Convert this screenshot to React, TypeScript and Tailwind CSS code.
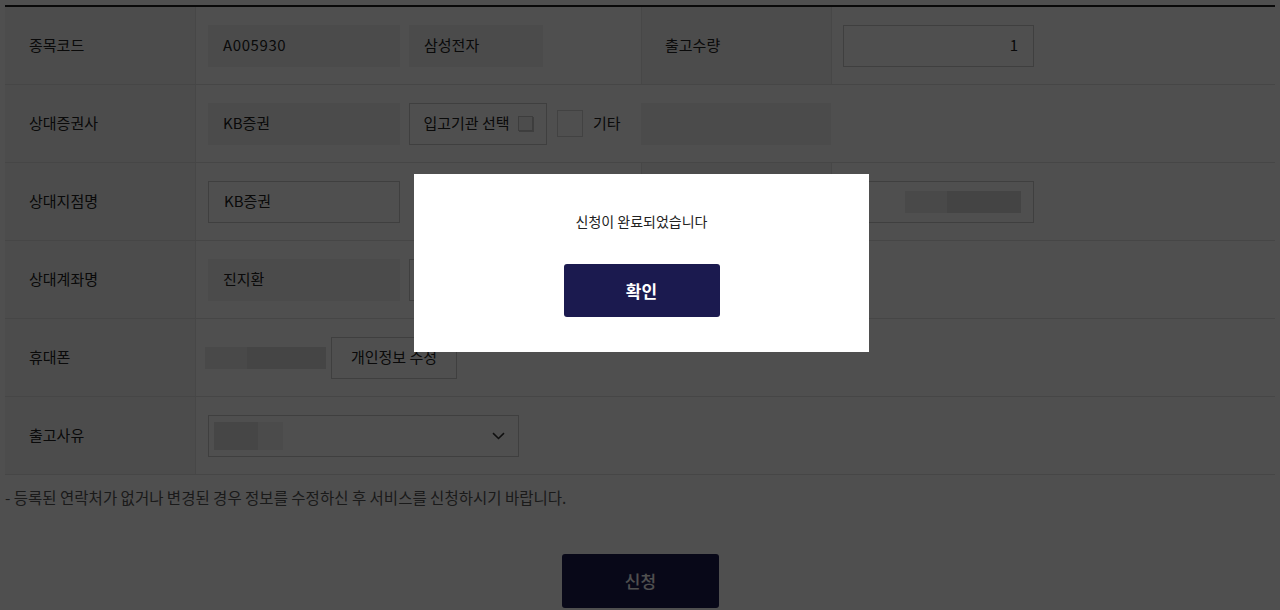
import React from "react";

const font = { fontFamily: '"Noto Sans CJK KR", "Noto Sans", sans-serif' };

const rowCls = "flex h-[78px] border-b border-[#e2e2e2]";
const labelCls =
	"w-[191px] shrink-0 bg-[#f5f5f5] border-r border-[#e6e6e6] flex items-center pl-[24px] text-[15px] text-[#222]";
const readBox = "h-[42px] bg-[#f2f2f2] flex items-center pl-[15px] text-[15px] text-[#222]";
const whiteBox =
	"h-[42px] bg-white border border-[#cccccc] flex items-center pl-[15px] text-[15px] text-[#222]";
const btnBox =
	"h-[42px] bg-white border border-[#cccccc] flex items-center justify-center text-[15px] text-[#222]";

function Label({ children }: { children: React.ReactNode }) {
	return <div className={labelCls}>{children}</div>;
}

function Masked({ a, b, ca, cb }: { a: number; b: number; ca: string; cb: string }) {
	return (
		<div className="flex h-[22px]">
			<div className={ca} style={{ width: a }} />
			<div className={cb} style={{ width: b }} />
		</div>
	);
}

export default function App() {
	return (
		<div className="relative h-[610px] w-[1280px] overflow-hidden bg-white" style={font}>
			<div className="px-[5px]">
				<div className="mt-[5px] border-t-2 border-[#1e1e1e]">
					{/* 종목코드 */}
					<div className={rowCls}>
						<Label>종목코드</Label>
						<div className="flex w-[445px] shrink-0 items-center gap-[9px] pl-[12px]">
							<div className={`${readBox} w-[192px] tracking-[0.04em]`}>A005930</div>
							<div className={`${readBox} w-[134px] pl-[14px]`}>삼성전자</div>
						</div>
						<div className="flex w-[191px] shrink-0 items-center border-x border-[#e6e6e6] bg-[#f5f5f5] pl-[23px] text-[15px] text-[#222]">
							출고수량
						</div>
						<div className="flex flex-1 items-center pl-[11px]">
							<div className="flex h-[42px] w-[191px] items-center justify-end border border-[#cccccc] bg-white pr-[15px] text-[15px] text-[#222]">
								1
							</div>
						</div>
					</div>

					{/* 상대증권사 */}
					<div className={rowCls}>
						<Label>상대증권사</Label>
						<div className="flex w-[445px] shrink-0 items-center pl-[12px]">
							<div className={`${readBox} w-[192px]`}>KB증권</div>
							<div className={`${btnBox} ml-[9px] w-[138px] gap-[8px]`}>
								<span>입고기관 선택</span>
								<span className="h-[15px] w-[15px] border border-[#c4c4c4] bg-[#f4f4f4] shadow-[1px_1px_0_#c8c8c8]" />
							</div>
							<div className="ml-[10px] h-[27px] w-[26px] border border-[#d4d4d4] bg-white" />
							<span className="ml-[10px] text-[15px] text-[#222]">기타</span>
						</div>
						<div className="flex items-center">
							<div className="h-[42px] w-[190px] bg-[#f2f2f2]" />
						</div>
					</div>

					{/* 상대지점명 */}
					<div className={rowCls}>
						<Label>상대지점명</Label>
						<div className="flex w-[445px] shrink-0 items-center pl-[12px]">
							<div className={`${whiteBox} w-[192px]`}>KB증권</div>
						</div>
						<div className="flex w-[191px] shrink-0 items-center border-x border-[#e6e6e6] bg-[#f5f5f5] pl-[23px] text-[15px] text-[#222]">
							상대계좌번호
						</div>
						<div className="flex flex-1 items-center pl-[11px]">
							<div className="flex h-[42px] w-[191px] items-center border border-[#cccccc] bg-white pl-[61px]">
								<Masked a={42} b={74} ca="bg-[#ececec]" cb="bg-[#dcdcdc]" />
							</div>
						</div>
					</div>

					{/* 상대계좌명 */}
					<div className={rowCls}>
						<Label>상대계좌명</Label>
						<div className="flex w-[445px] shrink-0 items-center pl-[12px]">
							<div className={`${readBox} w-[192px]`}>진지환</div>
							<div className={`${btnBox} ml-[9px] w-[100px]`}>계좌확인</div>
						</div>
					</div>

					{/* 휴대폰 */}
					<div className={rowCls}>
						<Label>휴대폰</Label>
						<div className="flex flex-1 items-center pl-[9px]">
							<Masked a={42} b={79} ca="bg-[#ececec]" cb="bg-[#dddddd]" />
							<div className={`${btnBox} ml-[5px] w-[126px]`}>개인정보 수정</div>
						</div>
					</div>

					{/* 출고사유 */}
					<div className={rowCls}>
						<Label>출고사유</Label>
						<div className="flex flex-1 items-center pl-[12px]">
							<div className="flex h-[42px] w-[311px] items-center justify-between border border-[#cccccc] bg-white pl-[5px] pr-[13px]">
								<div className="flex h-[28px]">
									<div className="h-[28px] w-[44px] bg-[#e2e2e2]" />
									<div className="h-[28px] w-[25px] bg-[#f1f1f1]" />
								</div>
								<svg width="13" height="8" viewBox="0 0 13 8" fill="none">
									<path d="M1 1.2l5.5 5.3 5.5-5.3" stroke="#333" strokeWidth="1.6" />
								</svg>
							</div>
						</div>
					</div>
				</div>

				<p className="mt-[12px] text-[15.5px] leading-[20px] text-[#555]">
					- 등록된 연락처가 없거나 변경된 경우 정보를 수정하신 후 서비스를 신청하시기 바랍니다.
				</p>

				<div className="mt-[47px] flex justify-center">
					<button className="ml-[1px] h-[54px] w-[157px] rounded-[3px] bg-[#1b1a4f] text-[17px] font-medium text-white">
						신청
					</button>
				</div>
			</div>

			{/* dim layer */}
			<div className="absolute inset-0 bg-black/[0.69]" />

			{/* alert */}
			<div className="absolute left-[414px] top-[174px] flex h-[178px] w-[455px] flex-col items-center bg-white pt-[37px]">
				<p className="text-[14px] leading-[20px] text-[#222]">신청이 완료되었습니다</p>
				<button className="mt-[33px] h-[53px] w-[156px] rounded-[3px] bg-[#1b1a4f] text-[17px] font-bold text-white">
					확인
				</button>
			</div>
		</div>
	);
}
